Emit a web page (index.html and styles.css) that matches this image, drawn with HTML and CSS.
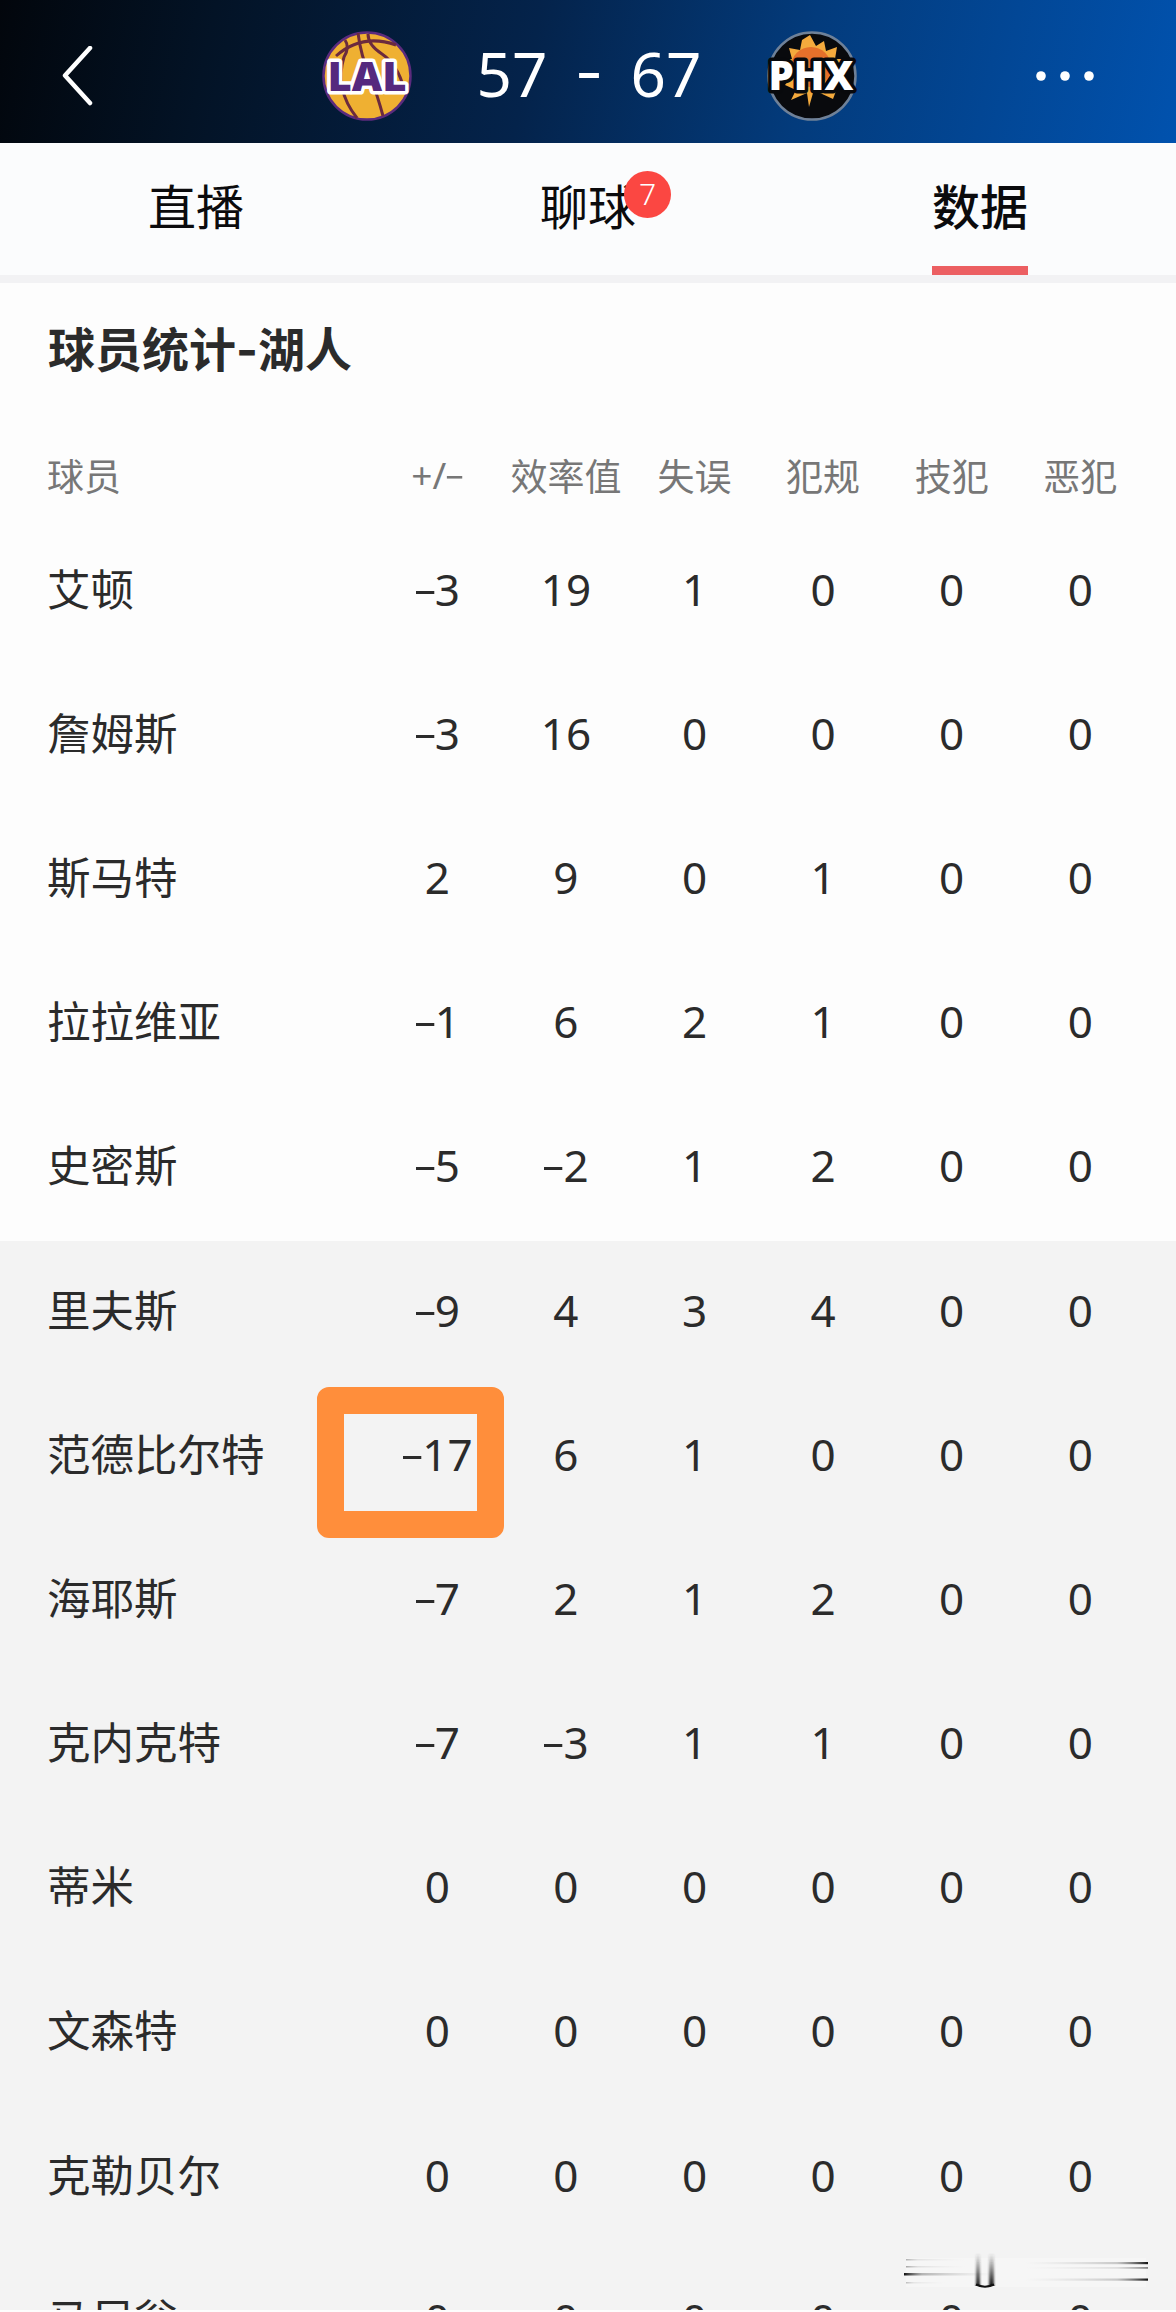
FILE: index.html
```
<!DOCTYPE html>
<html lang="zh-CN">
<head>
    <meta charset="UTF-8">
    <meta name="viewport" content="width=device-width, initial-scale=1.0">
    <title>湖人 57 - 67 太阳</title>
    <link rel="stylesheet" href="styles.css">
</head>
<body>
    <div class="page">
        <header class="match-bar">
            <svg class="back" viewBox="0 0 34 60">
                <path d="M30 2 L5 29.500 L30 57" fill="none" stroke="#fff" stroke-width="4.500" stroke-linecap="round" stroke-linejoin="round"/>
            </svg>
            <div class="score-board">
                <svg class="team-logo" viewBox="0 0 90 90">
                    <circle cx="45" cy="45" r="43.500" fill="#efb032" stroke="#5b2b7d" stroke-width="2.500"/>
                    <g fill="none" stroke="#6b2a3e" stroke-width="3">
                        <path d="M14 25 Q40 2 74 14"/>
                        <path d="M23 9 Q28 16 22 26 Q12 58 35 87"/>
                        <path d="M36 2 Q39 26 48 45 Q56 66 61 85"/>
                        <path d="M46 3 Q46 14 60 23 Q76 34 82 58"/>
                    </g>
                    <text class="logo-text lal" x="45" y="60" text-anchor="middle" textLength="79" lengthAdjust="spacingAndGlyphs">LAL</text>
                </svg>
                <div class="score"><span>57</span><span class="dash">-</span><span>67</span></div>
                <svg class="team-logo" viewBox="0 0 90 90">
                    <circle cx="45" cy="45" r="43.500" fill="#090a0d" stroke="#6f8198" stroke-width="2.500"/>
                    <path d="M43 4 L49 15 L57 10 L59 20 L70 16 L68 28 L79 28 L68 38 L72 52 L66 68 L53 62 L46 62 L42 76 L40 62 L24 69 L29 59 L18 54 L25 44 L17 29 L25 28 L22 17 L33 19 L35 9 Z" fill="#f4aa3d"/>
                    <circle cx="44" cy="36" r="20" fill="#e5702b"/>
                    <text class="logo-text phx" x="44" y="59" text-anchor="middle" textLength="85" lengthAdjust="spacingAndGlyphs">PHX</text>
                </svg>
            </div>
            <svg class="more" viewBox="0 0 60 12">
                <circle cx="6" cy="6" r="4.800" fill="#fff"/>
                <circle cx="30" cy="6" r="4.800" fill="#fff"/>
                <circle cx="54" cy="6" r="4.800" fill="#fff"/>
            </svg>
        </header>

        <nav class="tabs">
            <a class="tab"><span class="tab-label">直播</span></a>
            <a class="tab"><span class="tab-label">聊球<em class="badge">7</em></span></a>
            <a class="tab active"><span class="tab-label">数据</span></a>
        </nav>

        <h2 class="section-title">球员统计<span class="dash">-</span>湖人</h2>

        <div class="stats">
            <div class="row head"><span>球员</span><span>+/<i class="minus">-</i></span><span>效率值</span><span>失误</span><span>犯规</span><span>技犯</span><span>恶犯</span></div>
            <div class="row"><span>艾顿</span><span><i class="minus">-</i>3</span><span>19</span><span>1</span><span>0</span><span>0</span><span>0</span></div>
            <div class="row"><span>詹姆斯</span><span><i class="minus">-</i>3</span><span>16</span><span>0</span><span>0</span><span>0</span><span>0</span></div>
            <div class="row"><span>斯马特</span><span>2</span><span>9</span><span>0</span><span>1</span><span>0</span><span>0</span></div>
            <div class="row"><span>拉拉维亚</span><span><i class="minus">-</i>1</span><span>6</span><span>2</span><span>1</span><span>0</span><span>0</span></div>
            <div class="row"><span>史密斯</span><span><i class="minus">-</i>5</span><span><i class="minus">-</i>2</span><span>1</span><span>2</span><span>0</span><span>0</span></div>
            <div class="row bench"><span>里夫斯</span><span><i class="minus">-</i>9</span><span>4</span><span>3</span><span>4</span><span>0</span><span>0</span></div>
            <div class="row bench"><span>范德比尔特</span><span class="marked"><i class="minus">-</i>17</span><span>6</span><span>1</span><span>0</span><span>0</span><span>0</span></div>
            <div class="row bench"><span>海耶斯</span><span><i class="minus">-</i>7</span><span>2</span><span>1</span><span>2</span><span>0</span><span>0</span></div>
            <div class="row bench"><span>克内克特</span><span><i class="minus">-</i>7</span><span><i class="minus">-</i>3</span><span>1</span><span>1</span><span>0</span><span>0</span></div>
            <div class="row bench"><span>蒂米</span><span>0</span><span>0</span><span>0</span><span>0</span><span>0</span><span>0</span></div>
            <div class="row bench"><span>文森特</span><span>0</span><span>0</span><span>0</span><span>0</span><span>0</span><span>0</span></div>
            <div class="row bench"><span>克勒贝尔</span><span>0</span><span>0</span><span>0</span><span>0</span><span>0</span><span>0</span></div>
            <div class="row bench"><span>马尼翁</span><span>0</span><span>0</span><span>0</span><span>0</span><span>0</span><span>0</span></div>
        </div>

        <!-- smudged strip in the corner -->
        <svg class="smudge" viewBox="0 0 246 40">
            <defs>
                <linearGradient id="fadeRight"><stop offset="0" stop-color="#111"/><stop offset="0.200" stop-color="#888" stop-opacity="0.600"/><stop offset="1" stop-color="#ccc" stop-opacity="0"/></linearGradient>
                <linearGradient id="fadeLeft"><stop offset="0" stop-color="#ccc" stop-opacity="0"/><stop offset="0.750" stop-color="#999" stop-opacity="0.500"/><stop offset="1" stop-color="#111"/></linearGradient>
                <linearGradient id="fadeDown" x2="0" y2="1"><stop offset="0" stop-color="#333" stop-opacity="0"/><stop offset="1" stop-color="#111"/></linearGradient>
                <filter id="soft" x="-1" y="0" width="3" height="1"><feGaussianBlur stdDeviation="1.200 0"/></filter>
            </defs>
            <rect x="2" y="5" width="240" height="29" fill="#f6f6f6"/>
            <rect x="2" y="6" width="60" height="1.500" fill="url(#fadeRight)" opacity="0.300"/>
            <rect x="2" y="13" width="60" height="1.500" fill="url(#fadeRight)" opacity="0.350"/>
            <rect x="0" y="20" width="90" height="2.500" fill="url(#fadeRight)"/>
            <rect x="2" y="29" width="40" height="1.500" fill="url(#fadeRight)" opacity="0.250"/>
            <rect x="120" y="9" width="124" height="2.200" fill="url(#fadeLeft)"/>
            <rect x="120" y="14" width="124" height="1.800" fill="url(#fadeLeft)" opacity="0.500"/>
            <rect x="120" y="25.500" width="124" height="2.200" fill="url(#fadeLeft)"/>
            <rect x="72" y="0" width="4" height="33" fill="url(#fadeDown)" filter="url(#soft)"/>
            <rect x="85" y="0" width="5" height="33" fill="url(#fadeDown)" filter="url(#soft)"/>
            <path d="M72 31.500 Q81 36 90 31.500" fill="none" stroke="#111" stroke-width="2"/>
        </svg>
    </div>
</body>
</html>
```
FILE: styles.css
```
* {
    margin: 0;
    padding: 0;
    box-sizing: border-box;
}

body {
    font-family: "Noto Sans", "Noto Sans CJK SC", sans-serif;
    background: #fdfdfd;
    color: #2b2b2b;
}

.page {
    position: relative;
    width: 1176px;
    height: 2312px;
    overflow: hidden;
    border-bottom: 2px solid #fdfdfd;
}

.match-bar {
    display: flex;
    align-items: center;
    justify-content: space-between;
    height: 143px;
    padding: 9px 81px 0 60px;
    background: linear-gradient(102deg, #02060c 0%, #031326 18%, #04234b 45%, #033b7c 68%, #0152ae 100%);
    color: #fff;
}

.back {
    width: 34px;
    height: 60px;
}

.score-board {
    display: flex;
    align-items: center;
    gap: 65px;
    margin-left: 49px;
}

.team-logo {
    width: 90px;
    height: 90px;
    overflow: visible;
}

.logo-text {
    font-family: "Noto Sans", sans-serif;
    font-weight: 900;
    font-size: 41px;
    paint-order: stroke;
    stroke-width: 7px;
    stroke-linejoin: round;
}

.lal {
    fill: #55297e;
    stroke: #fff;
}

.phx {
    fill: #fff;
    stroke: #08090c;
}

.score {
    display: flex;
    align-items: center;
    justify-content: space-between;
    width: 225px;
    height: 90px;
    font-size: 62px;
    font-weight: 400;
    line-height: 84px;
    padding-bottom: 6px;
}

.dash,
.minus {
    font-family: Inter, sans-serif;
    font-style: normal;
}

.minus {
    display: inline-block;
    transform: scale(1.3, 0.85);
}

.more {
    width: 60px;
    height: 12px;
}

.tabs {
    display: flex;
    height: 140px;
    border-bottom: 8px solid #f2f2f4;
    background: #fbfcfd;
}

.tab {
    display: flex;
    flex: 1;
    justify-content: center;
    color: #0b0b0d;
    font-size: 48px;
    line-height: 128px;
}

.tab-label {
    position: relative;
    height: 132px;
}

.active .tab-label {
    border-bottom: 9px solid #ec5f62;
    font-weight: 500;
}

.badge {
    position: absolute;
    top: 28px;
    right: -35px;
    width: 47px;
    height: 47px;
    border-radius: 50%;
    background: #fb4742;
    color: #fff;
    font-size: 30px;
    font-style: normal;
    font-weight: 300;
    line-height: 45px;
    text-align: center;
}

.section-title {
    padding: 0 48px;
    font-size: 47px;
    font-weight: 700;
    line-height: 132px;
}

.row {
    display: grid;
    grid-template-columns: 326px repeat(6, 128.6px);
    align-items: center;
    height: 144.2px;
    padding: 0 0 7px 47px;
    font-size: 44px;
    white-space: nowrap;
}

.row span {
    text-align: center;
}

.row span:first-child {
    padding-bottom: 3px;
    font-size: 43.500px;
    text-align: left;
}

.head {
    height: 104px;
    padding: 13px 0 0 47px;
    color: #777;
    font-size: 37px;
}

.head span:first-child {
    padding-bottom: 0;
    font-size: 37px;
}

.bench {
    background: #f3f3f3;
}

.marked {
    position: relative;
}

/* orange marker frame around the highlighted value */
.marked::after {
    content: "";
    position: absolute;
    top: -37px;
    left: -56px;
    box-sizing: border-box;
    width: 187px;
    height: 151px;
    border: 27px solid #ff8e3b;
    border-radius: 12px;
}

.smudge {
    position: absolute;
    top: 2253px;
    left: 904px;
    width: 246px;
    height: 40px;
}
```
